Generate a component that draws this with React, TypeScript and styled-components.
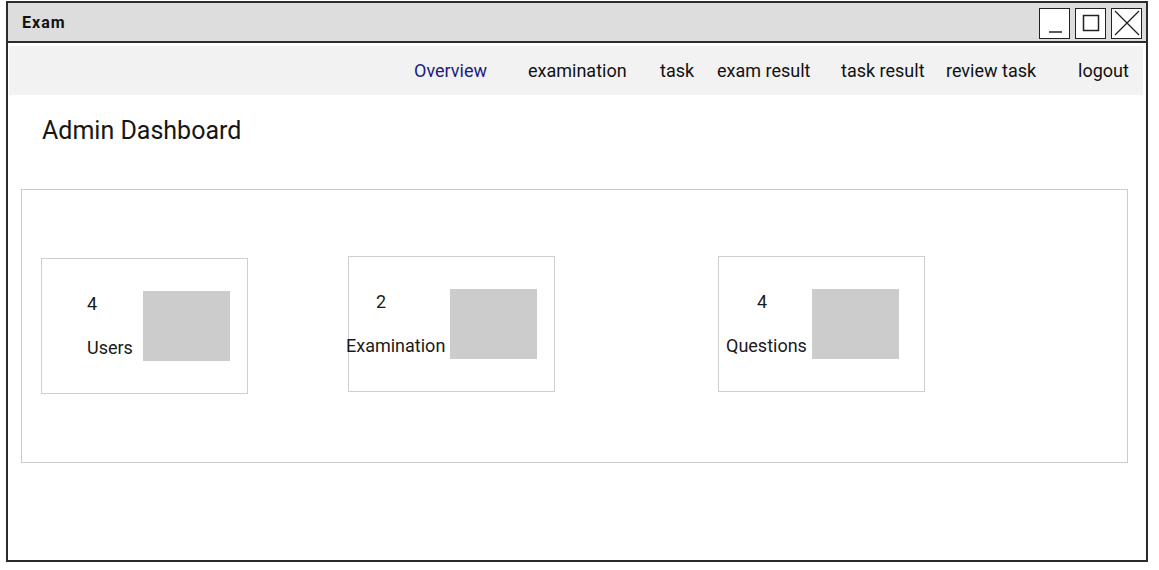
import React from 'react'
import styled, { createGlobalStyle } from 'styled-components'

const GlobalStyle = createGlobalStyle`
  body {
    margin: 0;
    background: #ffffff;
    font-family: Roboto, "Liberation Sans", sans-serif;
    color: #1a1a1a;
  }
`

const Window = styled.div`
  box-sizing: border-box;
  width: 1142px;
  height: 561px;
  margin: 1px 0 0 6px;
  border: 2px solid #2b2b2b;
  background: #ffffff;
  display: flex;
  flex-direction: column;
`

const TitleBar = styled.div`
  height: 38px;
  background: #dddddd;
  border-bottom: 2px solid #2b2b2b;
  display: flex;
  align-items: center;
  justify-content: space-between;
  padding: 0 4px 0 14px;
`

const Title = styled.span`
  font-size: 16px;
  font-weight: 700;
  letter-spacing: 1px;
  color: #111;
`

const WinButtons = styled.div`
  display: flex;
  gap: 5px;
  margin-top: 2px;
`

const WinButton = styled.div`
  box-sizing: border-box;
  width: 31px;
  height: 31px;
  border: 1.5px solid #222;
  background: #ffffff;
  display: flex;
  align-items: center;
  justify-content: center;
`

const NavBar = styled.nav`
  height: 49px;
  margin: 3px 3px 0 1px;
  background: #f2f2f2;
  display: grid;
  grid-template-columns: 114px 132px 57px 124px 105px 132px auto;
  align-items: center;
  padding-left: 405px;
`

const NavItem = styled.span<{ $active?: boolean }>`
  font-size: 18px;
  white-space: nowrap;
  color: ${({ $active }) => ($active ? '#1c1c7e' : '#111111')};
`

const Main = styled.main`
  padding: 0 18px 0 13px;
`

const Heading = styled.h1`
  margin: 21px 0 0 21px;
  font-size: 25px;
  font-weight: 400;
  line-height: 30px;
  color: #161616;
`

const Panel = styled.section`
  box-sizing: border-box;
  height: 274px;
  margin-top: 43px;
  border: 1.5px solid #cccccc;
  display: flex;
  align-items: flex-start;
  padding: 66px 0 0 19px;
`

const Card = styled.div<{ $left: number; $drop: number }>`
  box-sizing: border-box;
  width: 207px;
  height: 136px;
  margin-left: ${({ $left }) => $left}px;
  margin-top: ${({ $drop }) => $drop}px;
  border: 1.5px solid #cfcfcf;
  display: flex;
  align-items: flex-start;
`

const Stat = styled.div<{ $left: number; $width: number }>`
  margin-left: ${({ $left }) => $left}px;
  width: ${({ $width }) => $width}px;
  flex-shrink: 0;
  padding-top: 34px;
  display: flex;
  flex-direction: column;
  gap: 22px;
`

const Count = styled.span<{ $indent: number }>`
  padding-left: ${({ $indent }) => $indent}px;
  font-size: 18px;
  line-height: 22px;
`

const Label = styled.span`
  font-size: 18px;
  line-height: 22px;
  white-space: nowrap;
`

const Swatch = styled.div`
  width: 87px;
  height: 70px;
  margin-top: 32px;
  background: #cccccc;
`

const stats = [
  { count: 4, label: 'Users', left: 0, drop: 2, textLeft: 45, boxLeft: 101, indent: 0 },
  { count: 2, label: 'Examination', left: 100, drop: 0, textLeft: -3, boxLeft: 101, indent: 30 },
  { count: 4, label: 'Questions', left: 163, drop: 0, textLeft: 7, boxLeft: 93, indent: 31 },
]

const navItems = ['Overview', 'examination', 'task', 'exam result', 'task result', 'review task', 'logout']

export default function App() {
  return (
    <>
      <GlobalStyle />
      <Window>
        <TitleBar>
          <Title>Exam</Title>
          <WinButtons>
            <WinButton>
              <svg width="28" height="28" viewBox="0 0 28 28">
                <line x1="8" y1="23" x2="21" y2="23" stroke="#222" strokeWidth="1.5" />
              </svg>
            </WinButton>
            <WinButton>
              <svg width="28" height="28" viewBox="0 0 28 28">
                <rect x="6.5" y="6.5" width="15" height="15" fill="none" stroke="#222" strokeWidth="1.5" />
              </svg>
            </WinButton>
            <WinButton>
              <svg width="28" height="28" viewBox="0 0 28 28">
                <path d="M2 2 L26 26 M26 2 L2 26" stroke="#222" strokeWidth="1.3" fill="none" />
              </svg>
            </WinButton>
          </WinButtons>
        </TitleBar>
        <NavBar>
          {navItems.map((item, i) => (
            <NavItem key={item} $active={i === 0}>
              {item}
            </NavItem>
          ))}
        </NavBar>
        <Main>
          <Heading>Admin Dashboard</Heading>
          <Panel>
            {stats.map((s) => (
              <Card key={s.label} $left={s.left} $drop={s.drop}>
                <Stat $left={s.textLeft} $width={s.boxLeft - s.textLeft}>
                  <Count $indent={s.indent}>{s.count}</Count>
                  <Label>{s.label}</Label>
                </Stat>
                <Swatch />
              </Card>
            ))}
          </Panel>
        </Main>
      </Window>
    </>
  )
}
